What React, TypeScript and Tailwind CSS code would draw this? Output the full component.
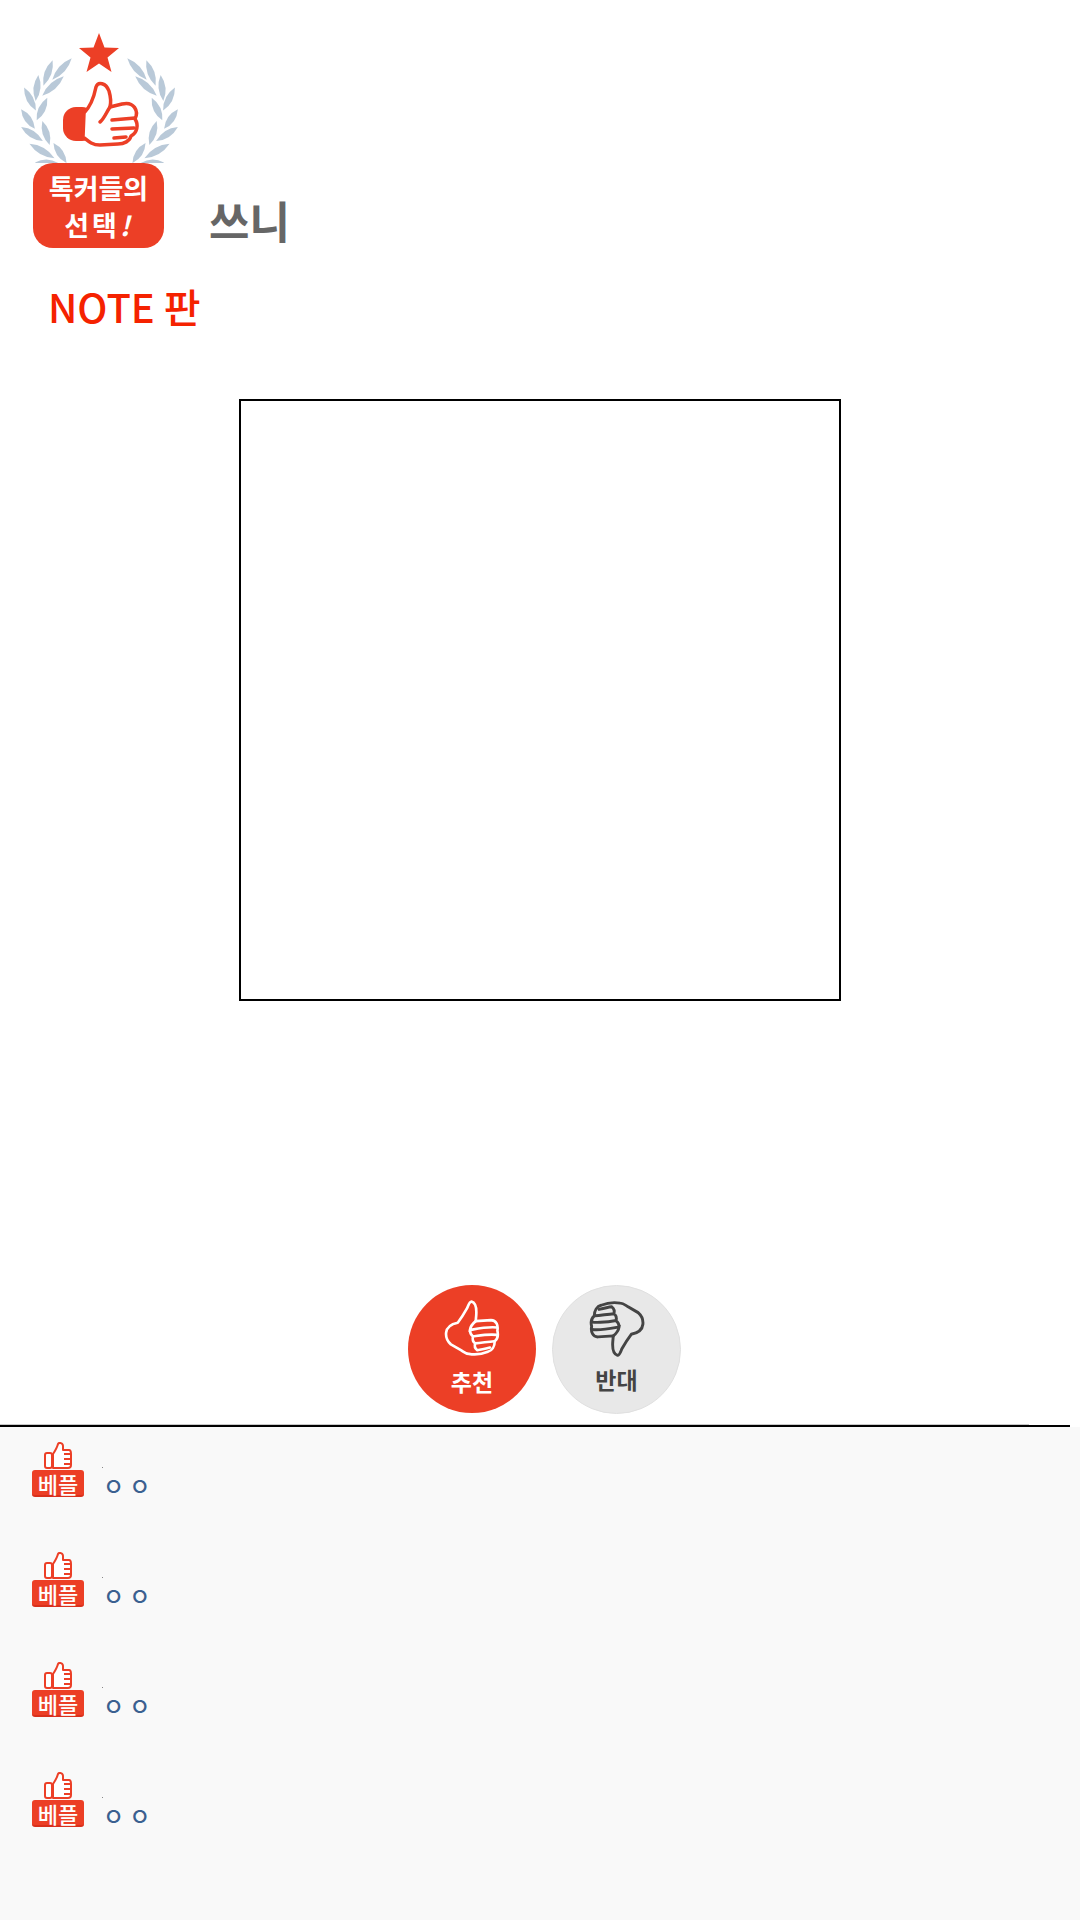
const KR = "font-['Noto_Sans_CJK_KR','Noto_Sans',sans-serif]";

const leaves: [number, number, number, number][] = [
  [62, 68, 29, -48],
  [48, 72, 27, -70],
  [53, 85, 29, -42],
  [37, 87, 26, -84],
  [42, 108, 25, -65],
  [30, 98, 26, 63],
  [28, 118, 24, 55],
  [46, 132, 25, 73],
  [32, 133, 26, 33],
  [42, 150, 29, 30],
  [60, 152, 24, 57],
  [47, 162, 24, 2],
];

const HAND =
  'M49 1C56 3 59 14 58 27L57 38L86 36C96 36 100 46 98 56C100 64 98 72 93 76C93 86 88 94 80 96C70 100 55 102 44 100C38 100 34 96 29 93L10 82C3 76 0 70 1 60C2 50 8 44 23 41C30 32 36 22 41 13C43 8 45 1 49 1Z';
const FINGERS = 'M57 38C52 42 47 48 46 55C62 52 80 48 97 50M46 55C46 60 48 64 52 67C66 65 82 62 97 64M52 67C50 72 52 78 56 80C68 79 80 77 92 76M56 80C54 86 56 90 60 93C68 92 76 90 84 88';

function Hand({ stroke, width, className }: { stroke: string; width: number; className: string }) {
  return (
    <svg viewBox="-3 -3 106 108" className={className}>
      <path d={HAND} fill="none" stroke={stroke} strokeWidth={width} strokeLinejoin="round" />
      <path d={FINGERS} fill="none" stroke={stroke} strokeWidth={width} strokeLinecap="round" />
    </svg>
  );
}

function Laurel() {
  return (
    <svg viewBox="20 30 160 132" className="w-[160px] h-[132px] block">
      <path
        d="M99 32l5.500 14.500 14.500.500-11.500 9.500 4 14.500-12.500-8.500-12.500 8.500 4-14.500-11.500-9.500 14.500-.500z"
        fill="#ec3f26"
      />
      {leaves.map(([x, y, l, a], i) => {
        const leaf = `M${-l / 2} 0Q0 -7 ${l / 2} 0Q0 7 ${-l / 2} 0Z`;
        return (
          <g key={i} fill="#b9c9d8">
            <path d={leaf} transform={`translate(${x} ${y}) rotate(${a})`} />
            <path d={leaf} transform={`translate(${199 - x} ${y}) rotate(${-a})`} />
          </g>
        );
      })}
      <rect x="63" y="106" width="32" height="34" rx="13" fill="#ec3f26" />
      <path
        d="M84 112C90 106 94 96 96 86C98 80 106 82 109 90C111 97 111 102 110 106L122 103C134 100 139 110 135 118C139 124 137 132 131 135C130 140 124 143 118 143L100 144C92 144 88 140 83 136Z"
        fill="#ffffff"
        stroke="#ec3f26"
        strokeWidth="3.500"
        strokeLinejoin="round"
      />
      <path
        d="M112 119L135 117M112 128L134 127M114 137L126 136M110 106C106 112 104 118 100 121"
        fill="none"
        stroke="#ec3f26"
        strokeWidth="3.500"
        strokeLinecap="round"
      />
    </svg>
  );
}

function SmallThumb() {
  return (
    <svg viewBox="0 0 28 27" className="w-[28px] h-[27px] block">
      <rect x="1" y="11" width="7" height="15" rx="2" fill="#ffffff" stroke="#ec3f26" strokeWidth="2" />
      <path
        d="M9 12C11 9 13 6 14 2C15 0 19 1 19 4L19 8L25 8C27 8 27 10 27 12L27 23C27 25 26 26 24 26L9 26Z"
        fill="#ffffff"
        stroke="#ec3f26"
        strokeWidth="2"
        strokeLinejoin="round"
      />
      <path d="M20 12L27 12M20 17L27 17M20 22L27 22" stroke="#ec3f26" strokeWidth="2" />
    </svg>
  );
}

function BestRow() {
  return (
    <div className="h-[110px] pl-[32px] flex items-start">
      <div className="w-[52px] flex flex-col items-center">
        <SmallThumb />
        <div className="w-[52px] h-[27px] mt-[1px] bg-[#ec3f26] rounded-[3px] border-b-2 border-[#d9301c] flex items-center justify-center text-white text-[22px] font-medium leading-none">
          베플
        </div>
      </div>
      <div className="ml-[18px] pt-[25px]">
        <div className="w-[1px] h-[1px] bg-[#888888]" />
        <span className="block ml-[1px] text-[#3b6090] text-[23px] font-medium leading-[34px] whitespace-pre">ㅇ ㅇ</span>
      </div>
    </div>
  );
}

export default function App() {
  return (
    <div className={`w-[1080px] h-[1920px] bg-white flex flex-col ${KR}`}>
      <div className="pt-[30px] pl-[20px] flex items-end h-[248px]">
        <div className="w-[160px] flex flex-col items-center">
          <Laurel />
          <div className="w-[131px] h-[85px] mr-[3px] bg-[#ec3f26] rounded-[20px] text-white font-bold text-[27px] leading-[37px] flex flex-col items-center justify-center">
            <span>톡커들의</span>
            <span className="tracking-[3px]">
              선택<span className="italic">!</span>
            </span>
          </div>
        </div>
        <span className="ml-[29px] text-[#666666] text-[44px] font-bold leading-[52px] pb-[2px]">쓰니</span>
      </div>
      <div className="pl-[48px] mt-[33px] text-[#f52200] text-[40px] font-medium leading-[50px]">NOTE 판</div>
      <div className="mt-[68px] w-[602px] h-[602px] self-center border-2 border-black" />
      <div className="mt-[284px] h-[130px] pl-[408px] flex items-start gap-[16px]">
        <div className="w-[128px] h-[128px] rounded-full bg-[#ec3f26] flex flex-col items-center pt-[14px]">
          <Hand stroke="#ffffff" width={5} className="w-[56px] h-[58px]" />
          <span className="text-white font-bold text-[23px] leading-[24px] mt-[12px]">추천</span>
        </div>
        <div className="w-[129px] h-[129px] rounded-full bg-[#e8e8e8] border border-[#e0e0e0] flex flex-col items-center pt-[14px]">
          <Hand stroke="#444444" width={5.500} className="w-[56px] h-[58px] rotate-180" />
          <span className="text-[#444444] font-bold text-[23px] leading-[24px] mt-[9px]">반대</span>
        </div>
      </div>
      <div className="mt-[9px] h-[1px] w-[1029px] bg-[#c8c8c8]" />
      <div className="h-[2px] w-[1070px] bg-black" />
      <div className="flex-1 bg-[#f9f9f9] pt-[15px]">
        <BestRow />
        <BestRow />
        <BestRow />
        <BestRow />
      </div>
    </div>
  );
}
